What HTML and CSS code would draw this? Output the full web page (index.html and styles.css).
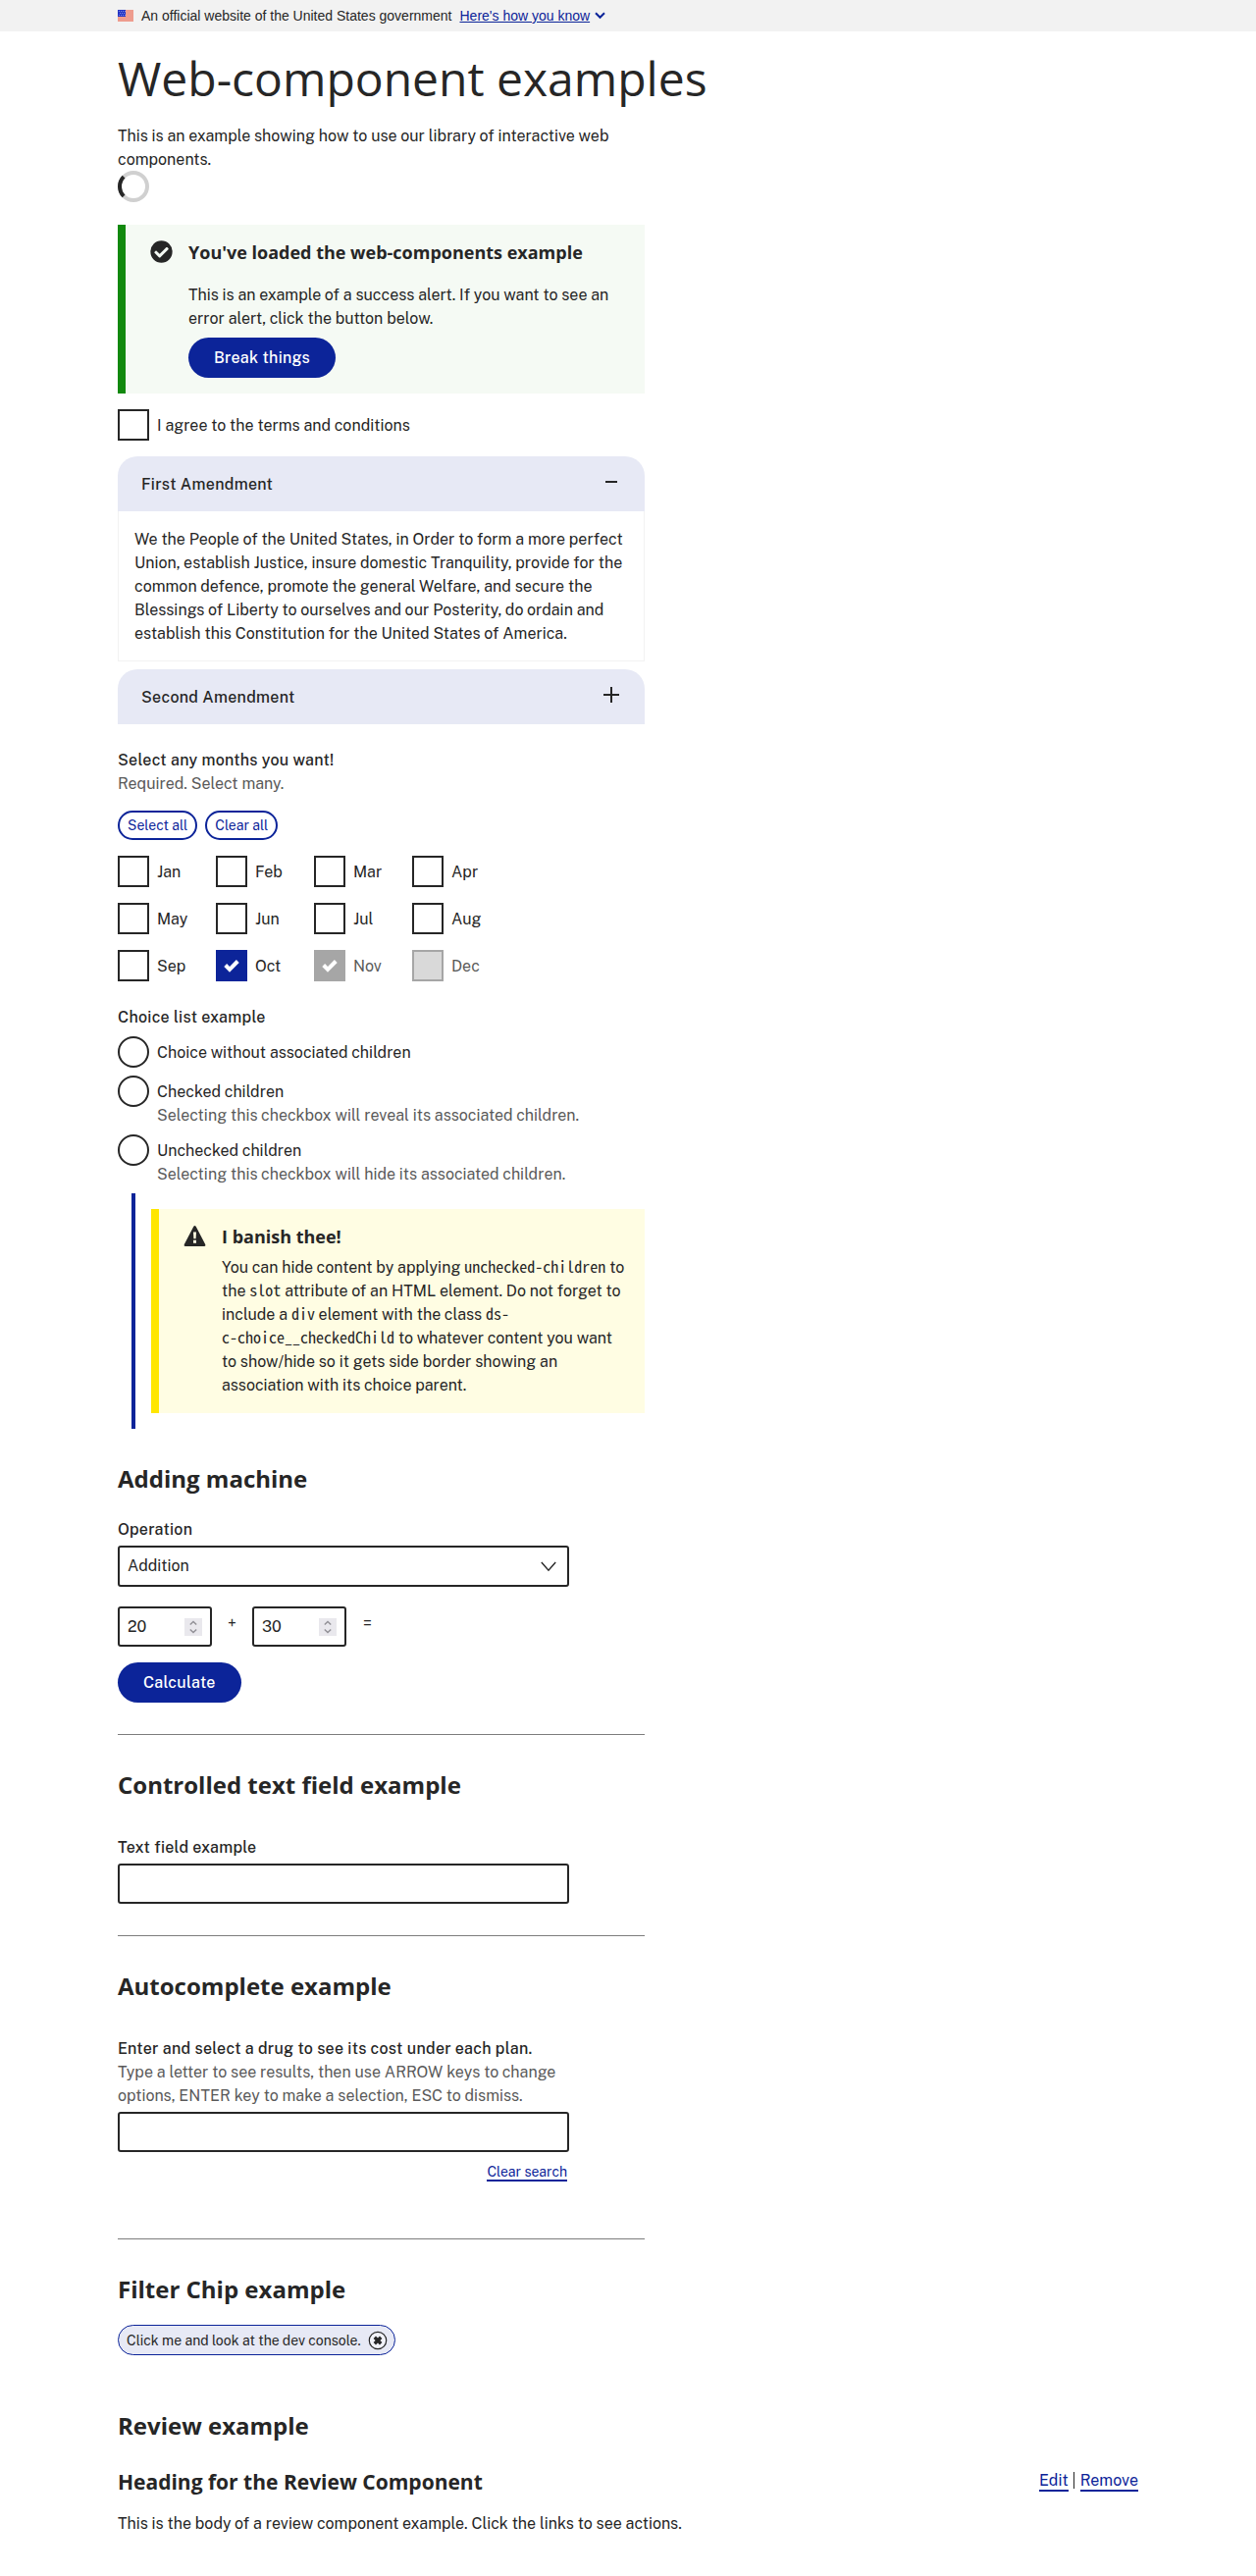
FILE: index.html
```html
<!DOCTYPE html>
<html lang="en">
<head>
<meta charset="utf-8">
<title>Web-component examples</title>
<link rel="stylesheet" href="styles.css">
</head>
<body>
<header class="banner">
  <svg class="banner-flag" width="16" height="12" viewBox="0 0 16 12" shape-rendering="crispEdges"><rect width="16" height="12" fill="#ee9c8e"/><rect width="8" height="7" fill="#2434c4"/><path d="M1 1h1v1h-1zM3 1h1v1h-1zM5 1h1v1h-1zM7 1h1v1h-1zM2 3h1v1h-1zM4 3h1v1h-1zM6 3h1v1h-1zM1 5h1v1h-1zM3 5h1v1h-1zM5 5h1v1h-1zM7 5h1v1h-1z" fill="#7f8fe8"/></svg>
  <span>An official website of the United States government</span>
  <a class="banner-link" href="#">Here's how you know</a>
  <svg class="banner-chevron" width="11" height="8" viewBox="0 0 11 8" fill="none" stroke="#0c2499" stroke-width="2"><path d="M1 1.3 5.5 5.8 10 1.3"/></svg>
</header>
<main class="page">
  <div class="column">
    <h1>Web-component examples</h1>
    <p class="intro">This is an example showing how to use our library of interactive web components.</p>
    <svg class="spinner" width="32" height="32" viewBox="0 0 32 32" fill="none" stroke-width="4"><circle cx="16" cy="16" r="14" stroke="#d0d0d0"/><path d="M6.1 25.9A14 14 0 0 1 6.1 6.1" stroke="#262626"/></svg>

    <section class="alert alert-success">
      <svg class="alert-icon" width="23" height="23" viewBox="0 0 512 512" fill="#262626"><path d="M504 256a248 248 0 1 1-496 0 248 248 0 0 1 496 0zM227.300 387.300l184-184c6.200-6.200 6.200-16.400 0-22.600l-22.600-22.600c-6.200-6.200-16.400-6.200-22.600 0L216 308.100l-70.100-70.100c-6.200-6.200-16.400-6.200-22.600 0l-22.600 22.600c-6.200 6.200-6.200 16.400 0 22.600l104 104c6.200 6.300 16.400 6.300 22.600.1z" fill-rule="evenodd"/></svg>
      <div class="alert-body">
        <h2 class="alert-heading">You've loaded the web-components example</h2>
        <p class="success-text">This is an example of a success alert. If you want to see an error alert, click the button below.</p>
        <button class="button">Break things</button>
      </div>
    </section>

    <label class="choice terms"><span class="box"></span>I agree to the terms and conditions</label>

    <div class="accordion">
      <div class="accordion-head"><span>First Amendment</span><svg width="16" height="16" viewBox="0 0 16 16" stroke="#262626" stroke-width="2"><path d="M2 8h12"/></svg></div>
      <div class="accordion-panel">We the People of the United States, in Order to form a more perfect Union, establish Justice, insure domestic Tranquility, provide for the common defence, promote the general Welfare, and secure the Blessings of Liberty to ourselves and our Posterity, do ordain and establish this Constitution for the United States of America.</div>
      <div class="accordion-head second"><span>Second Amendment</span><svg width="16" height="16" viewBox="0 0 16 16" stroke="#262626" stroke-width="2"><path d="M0 8h16M8 0v16"/></svg></div>
    </div>

    <div class="label months-label">Select any months you want!</div>
    <div class="hint">Required. Select many.</div>
    <div class="small-buttons"><button class="button-small">Select all</button><button class="button-small">Clear all</button></div>
    <div class="months">
      <label class="choice"><span class="box"></span>Jan</label>
      <label class="choice"><span class="box"></span>Feb</label>
      <label class="choice"><span class="box"></span>Mar</label>
      <label class="choice"><span class="box"></span>Apr</label>
      <label class="choice"><span class="box"></span>May</label>
      <label class="choice"><span class="box"></span>Jun</label>
      <label class="choice"><span class="box"></span>Jul</label>
      <label class="choice"><span class="box"></span>Aug</label>
      <label class="choice"><span class="box"></span>Sep</label>
      <label class="choice"><span class="box checked"><svg width="16" height="14" viewBox="0 0 16 14" fill="none" stroke="#fff" stroke-width="4"><path d="M1.700 6.500 6 10.800 14.300 2.500"/></svg></span>Oct</label>
      <label class="choice muted"><span class="box checked disabled-checked"><svg width="16" height="14" viewBox="0 0 16 14" fill="none" stroke="#fff" stroke-width="4"><path d="M1.700 6.500 6 10.800 14.300 2.500"/></svg></span>Nov</label>
      <label class="choice muted"><span class="box disabled"></span>Dec</label>
    </div>

    <div class="label choices-label">Choice list example</div>
    <label class="choice radio"><span class="box round"></span>Choice without associated children</label>
    <label class="choice radio"><span class="box round"></span>Checked children</label>
    <div class="hint choice-hint">Selecting this checkbox will reveal its associated children.</div>
    <label class="choice radio"><span class="box round"></span>Unchecked children</label>
    <div class="hint choice-hint">Selecting this checkbox will hide its associated children.</div>
    <div class="checked-child">
      <section class="alert alert-warn">
        <svg class="alert-icon" width="23" height="23" viewBox="0 0 23 23"><path d="M11.500 1.200 22.300 20.200Q22.800 21.900 21.300 21.900H1.700Q.2 21.900.7 20.200L10.200 2Q11.500.2 12.800 2L22.300 20.200z" fill="#262626"/><path d="M10 7.500h3l-.4 6.700h-2.200zM10 15.800h3v3h-3z" fill="#fffde3"/></svg>
        <div class="alert-body">
          <h2 class="alert-heading">I banish thee!</h2>
          <p class="warn-text">You can hide content by applying <code>unchecked-children</code> to the <code>slot</code> attribute of an HTML element. Do not forget to include a <code>div</code> element with the class <code>ds-<wbr><span class="nowrap">c-choice__checkedChild</span></code> to whatever content you want to show/hide so it gets side border showing an association with its choice parent.</p>
        </div>
      </section>
    </div>

    <h2 class="title machine-title">Adding machine</h2>
    <div class="label machine-label">Operation</div>
    <div class="field select"><span>Addition</span><svg width="16" height="11" viewBox="0 0 16 11" fill="none" stroke="#262626" stroke-width="1.400"><path d="M.8 1 8 9.200 15.200 1"/></svg></div>
    <div class="sum">
      <div class="field number"><span>20</span><svg width="18" height="18" viewBox="0 0 18 18"><rect width="18" height="18" fill="#e9e8ed"/><path d="M5.800 6.500 9 3.500l3.200 3M5.800 11.500l3.200 3 3.200-3" fill="none" stroke="#929197" stroke-width="1.500"/></svg></div>
      <span class="operator">+</span>
      <div class="field number"><span>30</span><svg width="18" height="18" viewBox="0 0 18 18"><rect width="18" height="18" fill="#e9e8ed"/><path d="M5.800 6.500 9 3.500l3.200 3M5.800 11.500l3.200 3 3.200-3" fill="none" stroke="#929197" stroke-width="1.500"/></svg></div>
      <span class="operator equals">=</span>
    </div>
    <button class="button calculate">Calculate</button>
    <hr class="rule-machine">

    <h2 class="title">Controlled text field example</h2>
    <div class="label field-label">Text field example</div>
    <div class="field"></div>
    <hr class="rule-text">

    <h2 class="title">Autocomplete example</h2>
    <div class="label field-label">Enter and select a drug to see its cost under each plan.</div>
    <div class="hint drug-hint">Type a letter to see results, then use ARROW keys to change options, ENTER key to make a selection, ESC to dismiss.</div>
    <div class="field"></div>
    <div class="clear-row"><a class="link small" href="#">Clear search</a></div>
    <hr class="rule-auto">

    <h2 class="title">Filter Chip example</h2>
    <button class="chip">Click me and look at the dev console.<svg width="20" height="20" viewBox="0 0 20 20" fill="none" stroke="#262626"><circle cx="10" cy="10" r="8.700" fill="#f2f3fa" stroke-width="1.200"/><path d="M6.800 6.800l6.400 6.400M13.200 6.800l-6.400 6.400" stroke-width="3.400"/></svg></button>
  </div>

  <h2 class="title review-title">Review example</h2>
  <div class="review">
    <div>
      <h3>Heading for the Review Component</h3>
      <p class="review-text">This is the body of a review component example. Click the links to see actions.</p>
    </div>
    <div class="review-actions"><a class="link" href="#">Edit</a><span class="divider"></span><a class="link" href="#">Remove</a></div>
  </div>
</main>
</body>
</html>
```
FILE: styles.css
```css
* { box-sizing: border-box; }
body {
  margin: 0;
  background: #fff;
  color: #262626;
  font: 16px/24px "Public Sans", Inter, "Liberation Sans", sans-serif;
}
h1, h2, h3, p { margin: 0; }
svg { display: block; flex: none; }
button { font: inherit; color: inherit; }

.banner {
  display: flex;
  align-items: center;
  height: 32px;
  padding: 0 120px;
  background: #f2f2f2;
  font: 14px/18px "Liberation Sans", Arial, sans-serif;
}
.banner-flag { margin-right: 8px; }
.banner-link { margin-left: 8px; color: #0c2499; }
.banner-chevron { margin-left: 5px; }

.page { padding: 16px 120px 0; }
.column { width: 537px; }
h1 {
  height: 78px;
  font: 400 48px/64.4px "Open Sans", sans-serif;
  white-space: nowrap;
}
.intro { height: 48px; padding-top: 1px; }

.alert { display: flex; padding: 16px 16px 16px 25px; border-left: 8px solid; }
.alert-success { height: 172px; margin-top: 23px; border-color: #12890e; background: #f5faf4; }
.alert-warn { height: 208px; border-color: #ffe600; background: #fffde3; }
.alert-icon { margin-right: 16px; }
.alert-heading { font: 700 18px/24px "Open Sans", sans-serif; }
.success-text { margin: 20px 0 7px; }
.warn-text { margin-top: 8px; }
code { font: 16px/16px "Noto Sans Mono CJK SC", "Noto Sans Mono CJK JP", "Liberation Mono", monospace; }
.nowrap { display: inline-block; white-space: nowrap; }

.button {
  display: block;
  height: 41px;
  padding: 0 26px;
  border: 0;
  border-radius: 21px;
  background: #0c2499;
  color: #fff;
  font-weight: 500;
  letter-spacing: 0.27px;
}

.choice { display: flex; align-items: center; gap: 8px; padding-top: 2px; }
.box {
  display: flex;
  flex: none;
  align-items: center;
  justify-content: center;
  width: 32px;
  height: 32px;
  margin-top: -2px;
  border: 2px solid #262626;
  background: #fff;
}
.round { border-radius: 50%; }
.checked { border-color: #0c2499; background: #0c2499; }
.disabled-checked { border-color: #a6a6a6; background: #a6a6a6; }
.disabled { border-color: #a6a6a6; background: #d9d9d9; }
.muted, .hint { color: #5a5a5a; }
.terms { margin: 16px 0; }

.accordion-head {
  display: flex;
  align-items: center;
  justify-content: space-between;
  height: 56px;
  padding: 2px 26px 0 24px;
  border-radius: 20px 20px 0 0;
  background: #e7e9f5;
  font-weight: 500;
  letter-spacing: 0.27px;
}
.accordion-head svg { margin-bottom: 6px; }
.accordion-panel { height: 153px; padding: 17px 16px 15px; border: 1px solid #f2f2f2; border-top: 0; }
.second { margin-top: 8px; }

.label { font-weight: 500; letter-spacing: 0.27px; }
.months-label { margin-top: 25px; }
.small-buttons { display: flex; gap: 8px; margin: 15px 0 16px; }
.button-small {
  height: 30px;
  padding: 0 8px;
  border: 2px solid #0c2499;
  border-radius: 15px;
  background: #fff;
  color: #0c2499;
  font-size: 14px;
}
.months { display: grid; grid-template-columns: repeat(4, 100px); row-gap: 16px; }

.choices-label { margin-top: 25px; }
.radio { margin-top: 8px; }
.choices-label + .radio { margin-top: 7px; }
.choice-hint { margin: -3px 0 -1px 40px; }
.checked-child { margin: 8px 0 0 14px; padding: 16px 0 16px 16px; border-left: 4px solid #0c2499; }

.title { font: 700 24px/31px "Open Sans", sans-serif; }
.machine-title { margin-top: 35px; }
.machine-label { margin: 25px 0 4px; }
.field {
  display: flex;
  align-items: center;
  justify-content: space-between;
  width: 460px;
  height: 41px;
  padding: 0 11px 0 8px;
  border: 2px solid #262626;
  border-radius: 3px;
}
.select { height: 42px; }
.sum { display: flex; margin: 20px 0 16px; }
.number { width: 96px; padding-right: 8px; }
.operator { width: 41px; padding-top: 6px; text-align: center; }
.equals { margin-left: 1px; }
hr { height: 1px; margin: 0 0 35px; border: 0; background: #7d7d7d; }
.rule-machine { margin-top: 32px; }
.field-label { margin: 37px 0 4px; }
.drug-hint { width: 460px; margin: -4px 0 4px; }
.rule-text { margin-top: 32px; }
.clear-row { display: flex; justify-content: flex-end; width: 458px; margin-top: 10px; }
.link { height: 21px; border-bottom: 2px solid #0c2499; color: #0c2499; line-height: 20px; text-decoration: none; }
.small { height: 20px; font-size: 14px; }
.rule-auto { margin-top: 58px; }
.chip {
  display: flex;
  align-items: center;
  height: 31px;
  margin-top: 21px;
  padding: 0 7px 0 8px;
  border: 1px solid #0c2499;
  border-radius: 16px;
  background: #e7e9f5;
  font-size: 14px;
}
.chip svg { margin-left: 7px; }

.review-title { margin-top: 56px; }
.review { display: flex; justify-content: space-between; margin-top: 28px; }
h3 { font: 700 21px/28px "Open Sans", sans-serif; }
.review-text { margin-top: 17px; }
.review-actions { display: flex; padding-top: 3px; }
.divider { width: 1px; height: 17px; margin: 1px 6px 0 5px; background: #262626; }
```
